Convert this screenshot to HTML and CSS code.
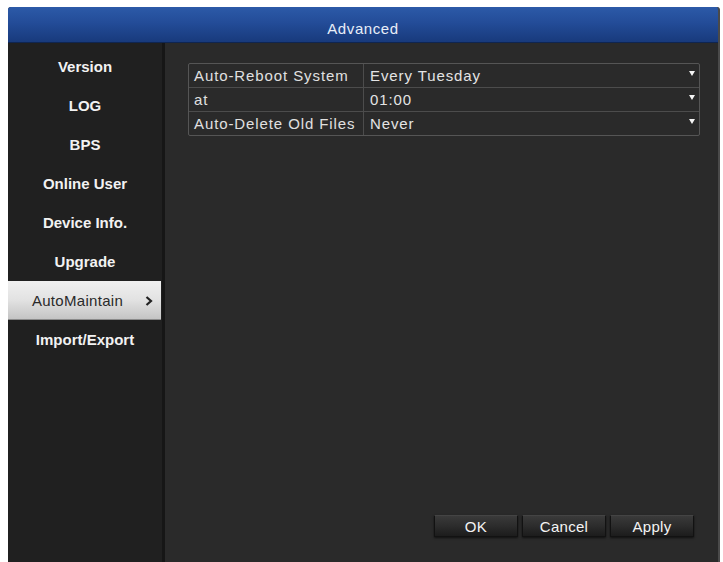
FILE: index.html
```html
<!DOCTYPE html>
<html>
<head>
<meta charset="utf-8">
<link rel="stylesheet" href="styles.css">
</head>
<body>
<div class="window">
  <div class="titlebar">Advanced</div>
  <div class="content">
    <nav class="sidebar">
      <div class="item">Version</div>
      <div class="item">LOG</div>
      <div class="item">BPS</div>
      <div class="item">Online User</div>
      <div class="item">Device Info.</div>
      <div class="item">Upgrade</div>
      <div class="item active">AutoMaintain<span class="chev"><svg width="8" height="10" viewBox="0 0 8 10"><path d="M1.5 1 L6 5 L1.5 9" fill="none" stroke="#222" stroke-width="2.2"/></svg></span></div>
      <div class="item">Import/Export</div>
    </nav>
    <main class="panel">
      <div class="table">
        <div class="row">
          <div class="label">Auto-Reboot System</div>
          <div class="value">Every Tuesday<span class="arrow"></span></div>
        </div>
        <div class="row">
          <div class="label">at</div>
          <div class="value">01:00<span class="arrow"></span></div>
        </div>
        <div class="row">
          <div class="label">Auto-Delete Old Files</div>
          <div class="value">Never<span class="arrow"></span></div>
        </div>
      </div>
      <div class="buttons">
        <button class="btn">OK</button>
        <button class="btn">Cancel</button>
        <button class="btn">Apply</button>
      </div>
    </main>
  </div>
</div>
</body>
</html>
```
FILE: styles.css
```css
html, body {
  margin: 0;
  padding: 0;
  background: #ffffff;
}
body {
  padding: 7px 0 0 8px;
  font-family: "Liberation Sans", Arial, sans-serif;
  height: 562px;
  box-sizing: border-box;
  overflow: hidden;
}
.window {
  width: 712px;
  height: 560px;
  display: flex;
  flex-direction: column;
  background: #2a2a2a;
  border-right: 2px solid #4a4a4a;
  border-radius: 3px 3px 0 0;
  overflow: hidden;
  box-sizing: border-box;
}
.titlebar {
  height: 36px;
  flex: none;
  background: linear-gradient(#2c5aa8 0%, #234c98 45%, #183a7c 100%);
  border-bottom: 1px solid #0f2550;
  color: #e8eef8;
  font-size: 15px;
  letter-spacing: 0.6px;
  display: flex;
  align-items: center;
  justify-content: center;
  padding-top: 8px;
  box-sizing: border-box;
}
.content {
  flex: 1;
  display: flex;
}
.sidebar {
  width: 154px;
  flex: none;
  background: #202020;
  border-right: 3px solid #161616;
  padding-top: 4px;
  box-sizing: content-box;
}
.item {
  height: 39px;
  display: flex;
  align-items: center;
  justify-content: center;
  color: #f2f2f2;
  font-size: 15px;
  font-weight: bold;
  position: relative;
}
.item.active {
  background: linear-gradient(#f0f0f0 0%, #e2e2e2 50%, #c4c4c4 100%);
  color: #2a2a2a;
  font-weight: normal;
  margin-right: 1px;
  border-bottom: 1px solid #8a8a8a;
  box-sizing: border-box;
  padding-right: 14px;
  letter-spacing: 0.3px;
}
.chev {
  position: absolute;
  right: 8px;
  top: 15px;
  display: flex;
}
.panel {
  flex: 1;
  display: flex;
  flex-direction: column;
  justify-content: space-between;
  padding: 20px 19px 30px 23px;
}
.table {
  width: 512px;
  border: 1px solid #555;
  border-radius: 2px;
  box-sizing: border-box;
}
.row {
  display: flex;
  height: 24px;
  border-top: 1px solid #4c4c4c;
  box-sizing: border-box;
}
.row:first-child {
  border-top: none;
  height: 23px;
}
.label {
  width: 175px;
  flex: none;
  border-right: 1px solid #4c4c4c;
  color: #e0e0e0;
  font-size: 15px;
  letter-spacing: 0.9px;
  padding-left: 5px;
  display: flex;
  align-items: center;
  box-sizing: border-box;
  white-space: nowrap;
  overflow: hidden;
}
.value {
  flex: 1;
  color: #e4e4e4;
  font-size: 15px;
  letter-spacing: 0.9px;
  padding-left: 6px;
  display: flex;
  align-items: center;
  position: relative;
}
.arrow {
  position: absolute;
  right: 4px;
  top: 7px;
  width: 0;
  height: 0;
  border-left: 3px solid transparent;
  border-right: 3px solid transparent;
  border-top: 5px solid #f4f4f4;
}
.buttons {
  display: flex;
  justify-content: flex-end;
  gap: 4px;
  padding-right: 6px;
}
.btn {
  width: 84px;
  height: 22px;
  background: linear-gradient(#3a3a3a 0%, #2c2c2c 50%, #1c1c1c 100%);
  border: 1px solid #121212;
  border-top-color: #444;
  color: #f4f4f4;
  font-family: "Liberation Sans", Arial, sans-serif;
  font-size: 15px;
  letter-spacing: 0.3px;
  padding: 0;
  box-shadow: 0 1px 2px rgba(0,0,0,0.6);
}
```
